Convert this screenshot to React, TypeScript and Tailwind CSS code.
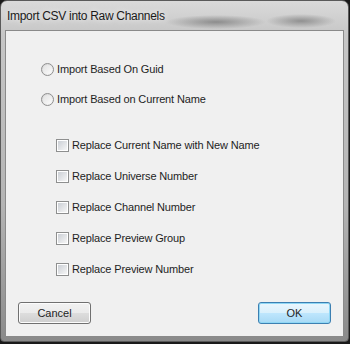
import React from "react";

const font = "font-['Segoe_UI','Liberation_Sans',Arial,sans-serif]";

const Radio = ({ label }: { label: string }) => (
  <label className="flex h-4 items-center">
    <span className="ml-[35px] flex h-[13px] w-[13px] items-center justify-center rounded-full border border-[#8f8f8f] bg-[linear-gradient(135deg,#d4d4d4,#f8f8f8)]">
      <span className="h-[9px] w-[9px] rounded-full bg-[linear-gradient(135deg,#e2e2e2,#fbfbfb)]" />
    </span>
    <span className="ml-[3px] text-[11px] tracking-[-0.15px] text-[#1e1e1e]">{label}</span>
  </label>
);

const Check = ({ label }: { label: string }) => (
  <label className="flex h-4 items-center">
    <span className="ml-[50px] flex h-[13px] w-[13px] items-center justify-center border border-[#8e8f8f] bg-white">
      <span className="h-[9px] w-[9px] bg-[linear-gradient(135deg,#cbcfd5,#f6f6f6)]" />
    </span>
    <span className="ml-[3px] text-[11px] tracking-[-0.15px] text-[#1e1e1e]">{label}</span>
  </label>
);

const Button = ({ label, primary }: { label: string; primary?: boolean }) => (
  <button
    className={
      primary
        ? "h-[22px] w-[73px] rounded-[3px] border border-[#3c7fb1] bg-[linear-gradient(#eaf6fd_0%,#d9f0fc_50%,#bee6fd_51%,#a7d9f5_100%)] text-[11px] text-[#1e1e1e] shadow-[inset_0_0_0_1px_#8fd7f5]"
        : "h-[22px] w-[73px] rounded-[3px] border border-[#707070] bg-[linear-gradient(#f2f2f2_0%,#ebebeb_50%,#dddddd_51%,#cfcfcf_100%)] text-[11px] text-[#1e1e1e] shadow-[inset_0_0_0_1px_#fcfcfc]"
    }
  >
    {label}
  </button>
);

export default function App() {
  return (
    <div className={`h-[344px] w-[350px] bg-[#1a1a1a] ${font}`}>
      <div className="flex h-[342px] w-[349px] flex-col rounded-t-[7px] rounded-b-[4px] border border-[#5a5a5a] bg-[radial-gradient(ellipse_50px_7px_at_215px_21px,#8c8c8c,transparent),radial-gradient(ellipse_35px_7px_at_300px_20px,#909090,transparent),linear-gradient(180deg,#dadada_0%,#c6c6c6_10%,#b4b4b4_60%,#8a8a8a_100%)] px-[4px] pb-[4px]">
        <div className="flex h-[29px] items-center pl-[2px] text-[12px] tracking-[-0.3px] text-[#1a1a1a] [text-shadow:0_0_6px_#ffffff]">
          Import CSV into Raw Channels
        </div>
        <div className="flex flex-1 flex-col border border-[#8a8a8a] bg-[#f0f0f0]">
          <div className="mt-[30px] flex flex-col gap-[14px]">
            <Radio label="Import Based On Guid" />
            <Radio label="Import Based on Current Name" />
          </div>
          <div className="mt-[30px] flex flex-col gap-[15px]">
            <Check label="Replace Current Name with New Name" />
            <Check label="Replace Universe Number" />
            <Check label="Replace Channel Number" />
            <Check label="Replace Preview Group" />
            <Check label="Replace Preview Number" />
          </div>
          <div className="mt-auto mb-[12px] flex justify-between px-[12px]">
            <Button label="Cancel" />
            <Button label="OK" primary />
          </div>
        </div>
      </div>
    </div>
  );
}
